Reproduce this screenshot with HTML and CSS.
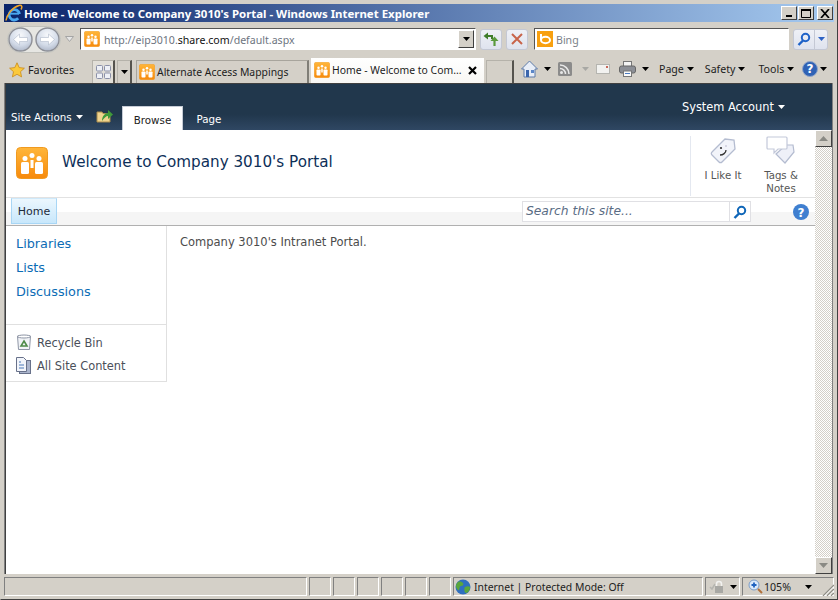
FILE: index.html
```html
<!DOCTYPE html>
<html lang="en">
<head>
    <meta charset="UTF-8">
    <meta name="viewport" content="width=device-width, initial-scale=1.0">
    <title>Home - Welcome to Company 3010's Portal</title>
    <link rel="stylesheet" href="styles.css">
</head>
<body>
    <svg class="defs" width="0" height="0">
        <defs>
            <linearGradient id="orange" x1="0" y1="0" x2="0" y2="1">
                <stop offset="0" stop-color="#ffb63a"/>
                <stop offset="1" stop-color="#f78a0c"/>
            </linearGradient>
            <radialGradient id="silver" cx="0.5" cy="0.3" r="0.75">
                <stop offset="0" stop-color="#f6f8fb"/>
                <stop offset="0.6" stop-color="#d3dbe8"/>
                <stop offset="1" stop-color="#a9b2c4"/>
            </radialGradient>
            <symbol id="site" viewBox="0 0 32 32">
                <rect x="0.5" y="0.5" width="31" height="31" rx="4" fill="url(#orange)" stroke="#f09a20"/>
                <rect x="5" y="15" width="8" height="12" rx="1.5" fill="#fff"/>
                <rect x="19" y="15" width="8" height="12" rx="1.5" fill="#fff"/>
                <rect x="14.5" y="13" width="3" height="8" fill="#fff"/>
                <circle cx="9" cy="11.5" r="2.5" fill="#fff"/>
                <circle cx="23" cy="11.5" r="2.5" fill="#fff"/>
                <circle cx="16" cy="8.5" r="2.5" fill="#fff"/>
            </symbol>
            <symbol id="caret" viewBox="0 0 7 4">
                <path d="M0 0h7L3.5 4z"/>
            </symbol>
        </defs>
    </svg>

    <div class="window">
        <header class="titlebar">
            <svg class="ie-logo" width="18" height="18" viewBox="0 0 18 18">
                <path d="M14.500 10a5.200 5.200 0 1 0-1.300 4.300" fill="none" stroke="#4aa8ee" stroke-width="2.800"/>
                <path d="M5 9.700h9" stroke="#4aa8ee" stroke-width="1.900"/>
                <path d="M1 16.500C2 10 8 3 14 1.500c3-.7 3.500 1.500 2 4" fill="none" stroke="#f0a52a" stroke-width="1.500"/>
            </svg>
            <span class="title-text">Home - Welcome to Company 3010's Portal - Windows Internet Explorer</span>
            <div class="win-btns">
                <button class="win-btn" aria-label="Minimize"><svg width="8" height="8"><path d="M1 6h6v2H1z" fill="#000"/></svg></button>
                <button class="win-btn" aria-label="Maximize"><svg width="10" height="10"><path d="M.5 1.500h9v8h-9z" fill="none" stroke="#000"/><path d="M0 1h10v2H0z" fill="#000"/></svg></button>
                <button class="win-btn win-close" aria-label="Close"><svg width="10" height="9"><path d="M1 0l8 9M9 0l-8 9" stroke="#000" stroke-width="1.700"/></svg></button>
            </div>
        </header>

        <div class="addressbar">
            <svg class="nav-orbs" width="54" height="27" viewBox="0 0 54 27">
                <rect x=".5" y=".5" width="53" height="26" rx="13" fill="#e6e6e2" stroke="#c2c2bc"/>
                <circle cx="13.500" cy="13.500" r="11.500" fill="url(#silver)" stroke="#8d8f96" stroke-width="1.400"/>
                <circle cx="40.500" cy="13.500" r="11.500" fill="url(#silver)" stroke="#8d8f96" stroke-width="1.400"/>
                <path d="M6.500 13.500l6-5.500v3.500h8v4h-8V19z" fill="#fff" stroke="#aeb8ca" stroke-width=".6"/>
                <path d="M47.500 13.500l-6-5.500v3.500h-8v4h8V19z" fill="#fff" stroke="#aeb8ca" stroke-width=".6"/>
            </svg>
            <svg class="history-drop" width="9" height="6" viewBox="0 0 9 6"><path d="M.5.5h8L4.500 5.500z" fill="#e6e6e6" stroke="#a5a5a5"/></svg>
            <div class="url-box">
                <svg width="16" height="16"><use href="#site"/></svg>
                <span class="url">http://eip3010.<b>share.com</b>/default.aspx</span>
                <span class="url-drop"><svg width="7" height="4"><use href="#caret"/></svg></span>
            </div>
            <button class="glass-btn" aria-label="Refresh">
                <svg width="16" height="14" viewBox="0 0 16 14"><path d="M4 4h5v3" fill="none" stroke="#3f7d2a" stroke-width="2"/><path d="M5 .5L.5 4 5 7.500z" fill="#3f7d2a"/><path d="M11.500 14V9" stroke="#5a9a3c" stroke-width="2.200"/><path d="M7.500 9l4-4.500 4 4.500z" fill="#5a9a3c"/></svg>
            </button>
            <button class="glass-btn" aria-label="Stop">
                <svg width="12" height="12" viewBox="0 0 12 12"><path d="M1 1l10 10M11 1L1 11" stroke="#c8644a" stroke-width="2"/></svg>
            </button>
            <div class="bing-box">
                <svg width="16" height="16" viewBox="0 0 16 16"><rect width="16" height="16" fill="#f8a00f"/><ellipse cx="8.500" cy="9" rx="4.500" ry="3.200" fill="none" stroke="#fff" stroke-width="2"/><path d="M4 3v6" stroke="#fff" stroke-width="2"/></svg>
                <span>Bing</span>
            </div>
            <div class="search-go">
                <span class="search-go-main">
                    <svg width="14" height="14" viewBox="0 0 14 14"><circle cx="8.500" cy="5.500" r="3.700" fill="none" stroke="#1e62c8" stroke-width="2"/><path d="M6 8.500L1.500 13" stroke="#1e62c8" stroke-width="2.400"/></svg>
                </span>
                <span class="search-go-drop"><svg width="7" height="4"><use href="#caret" fill="#2d62c4"/></svg></span>
            </div>
        </div>

        <div class="toolbar">
            <div class="favorites">
                <svg width="16" height="16" viewBox="0 0 16 16"><path d="M8 .8l2.200 4.800 5.200.6-3.900 3.500 1.100 5.200L8 12.300l-4.600 2.600 1.100-5.200L.6 6.200l5.200-.6z" fill="#fbc93c" stroke="#c98a1a" stroke-width=".8"/></svg>
                <span>Favorites</span>
            </div>
            <div class="tab-stub quick-tabs">
                <svg width="15" height="14" viewBox="0 0 15 14"><g fill="#eef0f6" stroke="#8b90a8"><rect x=".5" y=".5" width="6" height="5.500" rx="1"/><rect x="8.500" y=".5" width="6" height="5.500" rx="1"/><rect x=".5" y="8" width="6" height="5.500" rx="1"/><rect x="8.500" y="8" width="6" height="5.500" rx="1"/></g></svg>
            </div>
            <div class="tab-stub tab-list"><svg width="7" height="4"><use href="#caret"/></svg></div>
            <div class="browser-tab">
                <svg width="16" height="16"><use href="#site"/></svg>
                <span>Alternate Access Mappings</span>
            </div>
            <div class="browser-tab browser-tab-active">
                <svg width="16" height="16"><use href="#site"/></svg>
                <span class="tab-label">Home - Welcome to Com...</span>
                <svg width="9" height="9" viewBox="0 0 9 9"><path d="M1 1l7 7M8 1L1 8" stroke="#000" stroke-width="2.200"/></svg>
            </div>
            <div class="tab-stub new-tab"></div>
            <div class="commands">
                <svg class="cmd-home" width="17" height="18" viewBox="0 0 17 18"><path d="M8.500 1L.5 9h2.500v8h11V9h2.500z" fill="#e8eef8" stroke="#5d7aa8"/><rect x="5" y="10" width="3" height="7" fill="#3b66ad"/><rect x="10" y="10" width="3" height="3" fill="#5b86c8"/></svg>
                <svg class="cmd-caret cmd-c1" width="7" height="4"><use href="#caret"/></svg>
                <svg class="cmd-rss" width="14" height="14" viewBox="0 0 14 14"><rect width="14" height="14" rx="1.500" fill="#8b8b8b"/><circle cx="3.500" cy="10.500" r="1.500" fill="#e8e8e8"/><path d="M2 6.500a5.500 5.500 0 0 1 5.500 5.500M2 3a9 9 0 0 1 9 9" fill="none" stroke="#e8e8e8" stroke-width="1.500"/></svg>
                <svg class="cmd-caret cmd-off" width="7" height="4"><use href="#caret"/></svg>
                <svg class="cmd-mail" width="14" height="10" viewBox="0 0 14 10"><rect x=".5" y=".5" width="13" height="9" fill="#f2f2f0" stroke="#b5b5b0"/><rect x="10" y="2" width="2" height="2" fill="#c8685a"/></svg>
                <svg class="cmd-print" width="17" height="16" viewBox="0 0 17 16"><rect x="4.500" y=".5" width="8" height="5" fill="#f4f4f4" stroke="#777"/><rect x=".5" y="5" width="16" height="7" rx="2" fill="#8c8f96" stroke="#666"/><rect x="4.500" y="10" width="8" height="5.500" fill="#fafafa" stroke="#777"/><rect x="6" y="12" width="5" height="1" fill="#4a7bc0"/></svg>
                <svg class="cmd-caret cmd-c3" width="7" height="4"><use href="#caret"/></svg>
                <span class="cmd-menu cmd-page">Page <svg width="7" height="4"><use href="#caret"/></svg></span>
                <span class="cmd-menu cmd-safety">Safety <svg width="7" height="4"><use href="#caret"/></svg></span>
                <span class="cmd-menu cmd-tools">Tools <svg width="7" height="4"><use href="#caret"/></svg></span>
                <svg class="cmd-help" width="16" height="16" viewBox="0 0 16 16"><circle cx="8" cy="8" r="7.500" fill="#2f62b5" stroke="#8fa4c8"/><text x="8" y="12" class="help-mark">?</text></svg>
                <svg width="7" height="4"><use href="#caret"/></svg>
            </div>
        </div>

        <div class="viewport">
            <div class="ribbon">
                <div class="ribbon-left">
                    <span class="site-actions">Site Actions <svg width="7" height="4"><use href="#caret"/></svg></span>
                    <svg class="nav-folder" width="17" height="16" viewBox="0 0 17 16"><path d="M1 4h5l1 1.500h7V14H1z" fill="#efd48f" stroke="#a88a4a"/><path d="M6 13c0-5 3-8 6-8V2l5 4.500-5 4.500V8c-2 0-4 2-6 5z" fill="#3f9a3a"/></svg>
                    <span class="ribbon-tab ribbon-tab-active">Browse</span>
                    <span class="ribbon-tab">Page</span>
                </div>
                <span class="account">System Account <svg width="7" height="4"><use href="#caret"/></svg></span>
            </div>

            <div class="page-area">
                <div class="page">
                    <div class="title-row">
                        <svg class="site-logo" width="32" height="32"><use href="#site"/></svg>
                        <h1 class="site-title">Welcome to Company 3010's Portal</h1>
                        <div class="social">
                            <div class="social-item social-like">
                                <svg width="30" height="30" viewBox="0 0 30 30"><path d="M4 16L17 3l9 1 1 9L14 26a2 2 0 0 1-3 0l-7-7a2 2 0 0 1 0-3z" fill="#f2f4fa" stroke="#b4bcd0" stroke-width="1.300"/><circle cx="13" cy="12" r="1.100" fill="#333"/><circle cx="18" cy="10" r="1" fill="#ccd"/><path d="M12 19c3 0 6-2 6-5" fill="none" stroke="#333" stroke-width="1.300"/></svg>
                                <span>I Like It</span>
                            </div>
                            <div class="social-item social-tags">
                                <svg width="30" height="30" viewBox="0 0 30 30"><path d="M10 18l10-9h7l1 7-9 11z" fill="#eef0f8" stroke="#b4bcd0" stroke-width="1.200"/><path d="M2 1h18a1 1 0 0 1 1 1v10a1 1 0 0 1-1 1h-8l-4 4v-4H2a1 1 0 0 1-1-1V2a1 1 0 0 1 1-1z" fill="#fff" stroke="#c4c9da" stroke-width="1.200"/></svg>
                                <span>Tags &amp;<br>Notes</span>
                            </div>
                        </div>
                    </div>

                    <nav class="topnav">
                        <a class="topnav-home">Home</a>
                        <div class="site-search">
                            <span class="site-search-input">Search this site...</span>
                            <span class="site-search-go">
                                <svg width="14" height="14" viewBox="0 0 14 14"><circle cx="8.500" cy="5.500" r="3.700" fill="none" stroke="#0f66b8" stroke-width="2"/><path d="M6 8.500L1.500 13" stroke="#0f66b8" stroke-width="2.400"/></svg>
                            </span>
                        </div>
                        <svg class="page-help" width="16" height="16" viewBox="0 0 16 16"><circle cx="8" cy="8" r="8" fill="#3f7fd0"/><text x="8" y="12.500" class="help-mark">?</text></svg>
                    </nav>

                    <div class="page-body">
                        <aside class="sidenav">
                            <ul class="quicklaunch">
                                <li>Libraries</li>
                                <li>Lists</li>
                                <li>Discussions</li>
                            </ul>
                            <ul class="special">
                                <li>
                                    <svg width="16" height="17" viewBox="0 0 16 17"><path d="M1.500 2h13l-1 13.500h-11z" fill="#f1f3f7" stroke="#8f96a6"/><ellipse cx="8" cy="2.500" rx="6.500" ry="1.500" fill="#fff" stroke="#8f96a6"/><path d="M8 7l3 5H5z" fill="none" stroke="#4d8a48" stroke-width="1.600"/></svg>
                                    <span>Recycle Bin</span>
                                </li>
                                <li>
                                    <svg width="16" height="17" viewBox="0 0 16 17"><rect x="3.500" y="3.500" width="11" height="13" fill="#aab4cc" stroke="#68718a"/><path d="M.5.500h7l3 3v11H.5z" fill="#f2f5fb" stroke="#68718a"/><path d="M3 5h2M3 8h5M3 11h5" stroke="#4a78b8"/></svg>
                                    <span>All Site Content</span>
                                </li>
                            </ul>
                        </aside>
                        <main class="content">Company 3010's Intranet Portal.</main>
                    </div>
                </div>

                <div class="scrollbar">
                    <span class="scroll-btn"><svg width="9" height="5"><path d="M0 5h9L4.500 0z" fill="#8a8a84"/></svg></span>
                    <span class="scroll-track"></span>
                    <span class="scroll-btn"><svg width="9" height="5"><path d="M0 0h9L4.500 5z" fill="#8a8a84"/></svg></span>
                </div>
            </div>
        </div>

        <footer class="statusbar">
            <span class="status-cell status-main"></span>
            <span class="status-cell status-small"></span>
            <span class="status-cell status-small"></span>
            <span class="status-cell status-small"></span>
            <span class="status-cell status-small"></span>
            <span class="status-cell status-small"></span>
            <span class="status-cell status-small"></span>
            <span class="status-cell status-zone">
                <svg width="16" height="16" viewBox="0 0 16 16"><circle cx="8" cy="8" r="7.500" fill="#2f6fc0"/><path d="M3 3c2-1 4 0 5 1s0 3-2 3-1 3-2 4-3-2-3-4 1-3 2-4zM10 8c2-1 4-1 5 0 0 3-2 6-4 6s-2-5-1-6z" fill="#5aa63c"/></svg>
                <span>Internet | Protected Mode: Off</span>
            </span>
            <span class="status-cell status-lock">
                <svg width="16" height="14" viewBox="0 0 16 14"><path d="M1 7l2 2 3-5" fill="none" stroke="#b5b5b0" stroke-width="1.500"/><rect x="6" y="6" width="8" height="7" fill="#a8a8a4"/><path d="M7.500 6V4a2.500 2.500 0 0 1 5 0v2" fill="none" stroke="#f2f2f0" stroke-width="1.500"/></svg>
                <svg width="7" height="4"><use href="#caret"/></svg>
            </span>
            <span class="status-cell status-zoom">
                <svg width="15" height="15" viewBox="0 0 15 15"><circle cx="6" cy="6" r="5" fill="#dbe9fa" stroke="#7a9cc8"/><path d="M3.500 6h5M6 3.500v5" stroke="#1f62c0" stroke-width="1.800"/><path d="M10 10l4 4" stroke="#b0703a" stroke-width="2"/></svg>
                <span class="zoom-level">105%</span>
                <svg width="7" height="4"><use href="#caret"/></svg>
            </span>
            <svg class="grip" width="12" height="12" viewBox="0 0 12 12"><path d="M1 12L12 1M5 12l7-7M9 12l3-3" stroke="#8f8d86" stroke-width="1.300"/><path d="M2.500 12L12 2.500M6.500 12l5.500-5.500M10.500 12l1.500-1.500" stroke="#fff"/></svg>
        </footer>
    </div>
</body>
</html>
```

FILE: styles.css
```css
/* General Reset */
* {
    margin: 0;
    padding: 0;
    box-sizing: border-box;
}

html, body {
    width: 838px;
    height: 600px;
    overflow: hidden;
}

body {
    font-family: 'Noto Sans', sans-serif;
    font-size: 10.4px;
    color: #1c1c1c;
    background: #d4d0c8;
}

ul {
    list-style: none;
}

svg {
    display: block;
    flex: none;
}

button {
    border: none;
    background: none;
}

.defs {
    position: absolute;
}

.help-mark {
    font-family: 'DejaVu Sans', sans-serif;
    font-size: 12px;
    font-weight: bold;
    fill: #fff;
    text-anchor: middle;
}

/* Window frame */
.window {
    width: 838px;
    height: 600px;
    display: flex;
    flex-direction: column;
    padding: 3px;
    border: 1px solid #8f8d86;
    border-top-color: #d4d0c8;
    border-left-color: #d4d0c8;
    border-bottom-color: #404040;
    border-right-color: #404040;
}

/* Title bar */
.titlebar {
    height: 18px;
    flex: none;
    display: flex;
    align-items: center;
    background: linear-gradient(to right, #0a246a, #a6caf0);
}

.ie-logo {
    margin: 0 1px 0 1px;
}

.title-text {
    font-size: 11.45px;
    font-weight: bold;
    color: #fff;
    white-space: nowrap;
}

.win-btns {
    margin-left: auto;
    margin-right: 1px;
    display: flex;
    gap: 1px;
}

.win-btn {
    width: 16px;
    height: 14px;
    display: flex;
    align-items: center;
    justify-content: center;
    background: #d4d0c8;
    border: 1px solid;
    border-color: #fff #404040 #404040 #fff;
}

.win-close {
    margin-left: 2px;
}

/* Address row */
.addressbar {
    height: 33px;
    flex: none;
    display: flex;
    align-items: center;
    padding: 1px 0 0 3px;
}

.nav-orbs {
    margin-top: 1px;
}

.history-drop {
    margin: 0 6px 0 4px;
}

.url-box {
    width: 396px;
    height: 22px;
    flex: none;
    display: flex;
    align-items: center;
    gap: 4px;
    padding-left: 3px;
    background: #fff;
    border: 1px solid;
    border-color: #555 #fff #fff #555;
}

.url {
    padding-top: 1px;
    color: #6d7480;
    font-size: 10.6px;
    white-space: nowrap;
}

.url b {
    font-weight: normal;
    color: #111;
}

.url-drop {
    margin-left: auto;
    width: 16px;
    height: 18px;
    margin-right: 1px;
    display: flex;
    align-items: center;
    justify-content: center;
    background: #d4d0c8;
    border: 1px solid;
    border-color: #fff #404040 #404040 #fff;
}

.glass-btn {
    width: 22px;
    height: 21px;
    flex: none;
    margin-left: 4px;
    display: flex;
    align-items: center;
    justify-content: center;
    background: linear-gradient(#eef0f6, #dfe3ee);
    border: 1px solid #c4c8d4;
    border-radius: 3px;
}

.bing-box {
    width: 255px;
    height: 22px;
    flex: none;
    margin-left: 6px;
    display: flex;
    align-items: center;
    gap: 3px;
    padding-left: 2px;
    background: #fff;
    color: #7a7f88;
    font-size: 10.6px;
    border: 1px solid;
    border-color: #555 #fff #fff #555;
}

.bing-box span {
    padding-top: 1px;
}

.search-go {
    width: 35px;
    height: 21px;
    flex: none;
    margin-left: 4px;
    display: flex;
    background: linear-gradient(#eef0f6, #dfe3ee);
    border: 1px solid #c4c8d4;
    border-radius: 3px;
}

.search-go-main {
    width: 21px;
    display: flex;
    align-items: center;
    justify-content: center;
    border-right: 1px solid #c4c8d4;
}

.search-go-drop {
    flex: 1;
    display: flex;
    align-items: center;
    justify-content: center;
}

/* Favorites + tabs + commands */
.toolbar {
    height: 28px;
    flex: none;
    display: flex;
    align-items: flex-end;
}

.favorites {
    width: 88px;
    height: 28px;
    flex: none;
    display: flex;
    align-items: flex-start;
    gap: 3px;
    padding: 7px 0 0 5px;
    font-size: 10.8px;
    line-height: 15px;
}

.tab-stub {
    height: 23px;
    flex: none;
    display: flex;
    align-items: center;
    justify-content: center;
    border: 1px solid #b5b2aa;
    border-bottom: none;
    border-right: 2px solid #55534e;
}

.quick-tabs {
    width: 23px;
    background: #e2dfd8;
}

.tab-list {
    width: 15px;
    margin-left: 2px;
}

.browser-tab {
    width: 173px;
    height: 23px;
    flex: none;
    margin-left: 4px;
    display: flex;
    align-items: center;
    gap: 2px;
    padding-left: 2px;
    white-space: nowrap;
    border: 1px solid #a8a59d;
    border-bottom: none;
    border-right: 2px solid #807e77;
}

.browser-tab-active {
    height: 25px;
    margin-left: 2px;
    padding: 0 7px 1px 3px;
    background: linear-gradient(#fff, #f8f7f4);
    border: none;
}

.tab-label {
    flex: 1;
}

.new-tab {
    width: 28px;
    margin-left: 2px;
}

.commands {
    height: 28px;
    flex: 1;
    display: flex;
    align-items: center;
    padding-left: 7px;
    font-size: 10.6px;
}

.cmd-c1 { margin-left: 6px; }
.cmd-rss { margin-left: 7px; }
.cmd-off { margin-left: 10px; fill: #a8a8a4; }
.cmd-mail { margin-left: 7px; }
.cmd-print { margin-left: 9px; }
.cmd-c3 { margin-left: 6px; }

.cmd-menu {
    display: flex;
    align-items: center;
    gap: 3px;
    white-space: nowrap;
}

.cmd-page { margin-left: 10px; }
.cmd-safety { margin-left: 11px; }
.cmd-tools { margin-left: 13px; }
.cmd-help { margin: 0 2px 0 8px; }

/* Browser viewport */
.viewport {
    flex: 1;
    display: flex;
    flex-direction: column;
    min-height: 0;
    margin: 0 2px 0 1px;
    background: #fff;
    border-left: 1px solid #404040;
    border-top: 1px solid #404040;
    box-shadow: -1px 0 0 #808080, 1px 0 0 #808080;
    font-family: 'DejaVu Sans', sans-serif;
}

/* SharePoint ribbon */
.ribbon {
    height: 46px;
    flex: none;
    display: flex;
    justify-content: space-between;
    background: linear-gradient(#21374c 0, #21374c 66%, #2f4763 100%);
    color: #fff;
    font-size: 11.4px;
}

.ribbon-left {
    display: flex;
    align-items: flex-end;
    font-size: 10.3px;
}

.site-actions {
    width: 90px;
    flex: none;
    display: flex;
    align-items: center;
    gap: 4px;
    padding: 0 0 7px 5px;
    white-space: nowrap;
    fill: #fff;
}

.nav-folder {
    margin: 0 9px 6px 0;
}

.ribbon-tab {
    width: 61px;
    height: 24px;
    padding-top: 7px;
    text-align: center;
}

.ribbon-tab-active {
    background: #fff;
    color: #222;
    border: 1px solid #c6ccd6;
    border-bottom: none;
}

.ribbon-tab:last-child {
    width: 52px;
}

.account {
    display: flex;
    align-items: center;
    gap: 4px;
    height: 46px;
    padding-right: 47px;
    fill: #fff;
    white-space: nowrap;
}

.page-area {
    flex: 1;
    display: flex;
    min-height: 0;
}

.page {
    flex: 1;
    display: flex;
    flex-direction: column;
    min-width: 0;
}

/* Site title row */
.title-row {
    height: 68px;
    flex: none;
    display: flex;
    align-items: flex-start;
    border-bottom: 1px solid #e2e2e2;
}

.site-logo {
    margin: 17px 14px 0 10px;
}

.site-title {
    font-size: 15.2px;
    font-weight: normal;
    color: #0d2f58;
    margin-top: 23px;
    white-space: nowrap;
}

.social {
    margin: 6px 0 0 auto;
    display: flex;
    height: 60px;
    width: 125px;
    border-left: 1px solid #e4e8f0;
    color: #555;
    font-size: 10.2px;
    line-height: 13px;
    text-align: center;
}

.social-item {
    display: flex;
    flex-direction: column;
    align-items: center;
    gap: 3px;
}

.social-like { width: 64px; }
.social-tags { width: 52px; }

/* Top nav */
.topnav {
    height: 28px;
    flex: none;
    display: flex;
    align-items: flex-start;
    background: linear-gradient(#fff 0, #fff 50%, #f5f5f5 50%, #f5f5f5 100%);
    border-bottom: 1px solid #b0b0b0;
}

.topnav-home {
    width: 46px;
    height: 26px;
    flex: none;
    margin-left: 5px;
    line-height: 25px;
    text-align: center;
    font-size: 11px;
    color: #1c2c3c;
    background: linear-gradient(#ecf7fe, #c8e7fb);
    border: 1px solid #a8d6f5;
    border-top-color: #cfe9fa;
}

.site-search {
    width: 229px;
    height: 21px;
    flex: none;
    margin: 3px 0 0 465px;
    display: flex;
    background: #fff;
    border: 1px solid #e0e0e4;
}

.site-search-input {
    flex: 1;
    padding-left: 3px;
    font-size: 12.3px;
    font-style: italic;
    line-height: 18px;
    color: #5a6c84;
    white-space: nowrap;
}

.site-search-go {
    width: 21px;
    display: flex;
    align-items: center;
    justify-content: center;
    border-left: 1px solid #e0e0e4;
}

.page-help {
    margin: 6px 0 0 42px;
}

/* Body columns */
.page-body {
    flex: 1;
    display: flex;
    align-items: flex-start;
}

.sidenav {
    width: 161px;
    flex: none;
    border-right: 1px solid #e0e0e0;
    border-bottom: 1px solid #e0e0e0;
}

.quicklaunch {
    height: 99px;
    padding: 6px 0 0 10px;
    font-size: 12.8px;
    line-height: 24px;
    color: #0b6cb5;
    border-bottom: 1px solid #e0e0e0;
}

.special {
    height: 56px;
    padding: 6px 0 0 10px;
    font-size: 11.4px;
    color: #4a4f5a;
}

.special li {
    height: 23px;
    display: flex;
    align-items: center;
    gap: 5px;
}

.content {
    padding: 9px 0 0 13px;
    font-size: 11.5px;
    line-height: 14px;
    color: #4c4c4c;
}

/* Scrollbar */
.scrollbar {
    width: 17px;
    flex: none;
    display: flex;
    flex-direction: column;
    background: repeating-conic-gradient(#d4d0c8 0 25%, #fff 0 50%) 0 0 / 2px 2px;
}

.scroll-btn {
    height: 17px;
    flex: none;
    display: flex;
    align-items: center;
    justify-content: center;
    background: #d4d0c8;
    border: 1px solid;
    border-color: #fff #404040 #404040 #fff;
}

.scroll-track {
    flex: 1;
}

/* Status bar */
.statusbar {
    height: 19px;
    flex: none;
    display: flex;
    align-items: stretch;
    gap: 2px;
    margin-top: 3px;
    position: relative;
}

.status-cell {
    display: flex;
    align-items: center;
    border: 1px solid;
    border-color: #808080 #fff #fff #808080;
}

.status-main { width: 303px; }
.status-small { width: 22px; }

.status-zone {
    width: 250px;
    gap: 3px;
    padding-left: 1px;
    font-size: 10.4px;
    white-space: nowrap;
}

.status-lock {
    width: 35px;
    gap: 5px;
    padding-left: 3px;
}

.status-zoom {
    flex: 1;
    padding-left: 5px;
    gap: 1px;
    font-size: 10.6px;
}

.zoom-level {
    width: 40px;
}

.grip {
    position: absolute;
    right: 0;
    bottom: 0;
}
```
